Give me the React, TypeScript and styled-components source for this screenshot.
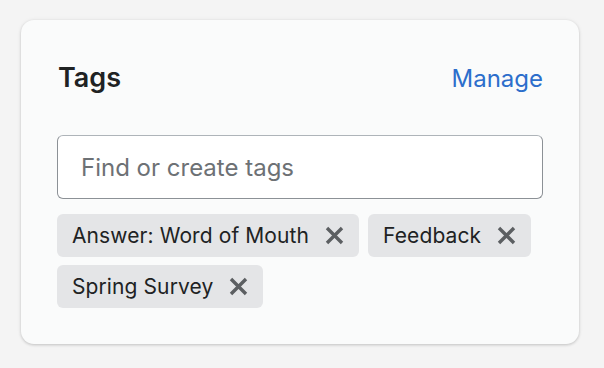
import React from 'react';
import styled, { createGlobalStyle } from 'styled-components';

const GlobalStyle = createGlobalStyle`
  html, body {
    margin: 0;
    padding: 0;
    background: #f4f4f4;
  }
  body {
    font-family: Inter, "Noto Sans", "Liberation Sans", sans-serif;
    -webkit-font-smoothing: antialiased;
  }
`;

const Page = styled.div`
  padding: 20px 25px 25px 21px;
`;

const Card = styled.section`
  width: 558px;
  box-sizing: border-box;
  padding: 36px 36px 36px 36px;
  background: #fafbfb;
  border-radius: 13px;
  box-shadow: 0 0 5px rgba(23, 24, 24, 0.05), 0 1px 3px rgba(0, 0, 0, 0.18);
`;

const Header = styled.div`
  display: flex;
  align-items: baseline;
  justify-content: space-between;
  height: 40px;
  padding-left: 1px;
  margin: 2px 0 37px;
`;

const Title = styled.h2`
  margin: 0;
  font-size: 27px;
  line-height: 40px;
  font-weight: 600;
  color: #202223;
`;

const ManageLink = styled.a`
  font-size: 24px;
  line-height: 40px;
  color: #2c6ecb;
  text-decoration: none;
  cursor: pointer;
`;

const SearchInput = styled.input`
  display: block;
  width: 100%;
  height: 64px;
  box-sizing: border-box;
  padding: 0 23px;
  border: 1px solid #8c9196;
  border-top-color: #aeb4b9;
  border-radius: 6px;
  background: #ffffff;
  font-family: inherit;
  font-size: 24px;
  color: #202223;
  outline: none;

  &::placeholder {
    color: #6d7175;
  }
`;

const TagList = styled.ul`
  list-style: none;
  margin: 15px 0 0;
  padding: 0;
  display: flex;
  flex-wrap: wrap;
  gap: 8px 9px;
`;

const Chip = styled.li`
  display: flex;
  align-items: center;
  height: 43px;
  padding: 0 15px 0 15px;
  border-radius: 6px;
  background: #e4e5e7;
  font-size: 21px;
  letter-spacing: 0.1px;
  color: #202223;
`;

const RemoveButton = styled.button`
  display: flex;
  align-items: center;
  justify-content: center;
  margin-left: 16px;
  padding: 0;
  border: 0;
  background: none;
  color: #5c5f62;
  cursor: pointer;
`;

const CloseIcon = () => (
  <svg width="19" height="19" viewBox="0 0 19 19" aria-hidden="true">
    <path d="M2 2L17 17M17 2L2 17" stroke="currentColor" strokeWidth="3.4" />
  </svg>
);

const tags = ['Answer: Word of Mouth', 'Feedback', 'Spring Survey'];

export default function App() {
  return (
    <>
      <GlobalStyle />
      <Page>
        <Card>
          <Header>
            <Title>Tags</Title>
            <ManageLink>Manage</ManageLink>
          </Header>
          <SearchInput placeholder="Find or create tags" />
          <TagList>
            {tags.map((tag) => (
              <Chip key={tag}>
                {tag}
                <RemoveButton aria-label={`Remove ${tag}`}>
                  <CloseIcon />
                </RemoveButton>
              </Chip>
            ))}
          </TagList>
        </Card>
      </Page>
    </>
  );
}
